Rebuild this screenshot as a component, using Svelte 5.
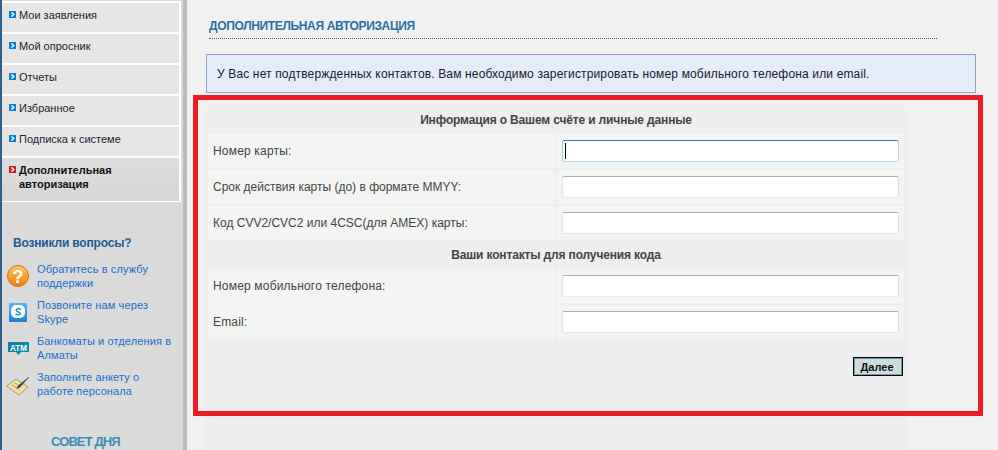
<script>
  const menu = ["Мои заявления", "Мой опросник", "Отчеты", "Избранное", "Подписка к системе"];
  const accountFields = [
    { label: "Номер карты:", wide: true },
    { label: "Срок действия карты (до) в формате MMYY:" },
    { label: "Код CVV2/CVC2 или 4CSC(для AMEX) карты:" },
  ];
  const contactFields = [
    { label: "Номер мобильного телефона:", wide: true },
    { label: "Email:", wide: true },
  ];
</script>

{#snippet bullet()}
  <svg class="bullet" width="7" height="7" viewBox="0 0 7 7">
    <rect width="7" height="7" fill="currentColor" />
    <polyline points="2.5,1.5 4.7,3.5 2.5,5.5" fill="none" stroke="#fff" stroke-width="1.4" />
  </svg>
{/snippet}

<div class="page">
  <aside class="sidebar">
    <ul class="menu">
      {#each menu as item}
        <li class="menu-item">{@render bullet()}<span>{item}</span></li>
      {/each}
      <li class="menu-item active">{@render bullet()}<span>Дополнительная<br />авторизация</span></li>
    </ul>

    <h3 class="help-title">Возникли вопросы?</h3>
    <ul class="help">
      <li>
        <svg width="24" height="24" viewBox="0 0 24 24">
          <defs>
            <linearGradient id="q" x1="0" y1="0" x2="0" y2="1">
              <stop offset="0" stop-color="#fccb5c" />
              <stop offset="1" stop-color="#f07c0e" />
            </linearGradient>
            <linearGradient id="sk" x1="0" y1="0" x2="0" y2="1">
              <stop offset="0" stop-color="#5ab4ee" />
              <stop offset="1" stop-color="#1c7fd6" />
            </linearGradient>
          </defs>
          <circle cx="12" cy="12" r="10.5" fill="url(#q)" stroke="#dd6f10" />
          <text x="12" y="18.500" text-anchor="middle" class="q-mark">?</text>
        </svg>
        <a href="#support">Обратитесь в службу<br />поддержки</a>
      </li>
      <li>
        <svg width="24" height="24" viewBox="0 0 24 24">
          <rect x="3" y="3" width="18" height="19" rx="1" fill="url(#sk)" />
          <rect x="5" y="5" width="14" height="13" rx="5" fill="#fff" />
          <path d="M15 9.400c-.8-.9-4.800-1.200-4.800.9 0 2.100 4.200 1.200 4.200 3.100 0 1.700-3.400 1.500-4.800.5" fill="none" stroke="#2a8fe0" stroke-width="1.500" />
        </svg>
        <a href="#skype">Позвоните нам через<br />Skype</a>
      </li>
      <li>
        <svg width="24" height="24" viewBox="0 0 24 24">
          <path d="M2 6h21v10h-8l-2.500 3-2.500-3H2z" fill="#0f86a8" />
          <text x="4" y="14.500" textLength="17" lengthAdjust="spacingAndGlyphs" class="atm">ATM</text>
        </svg>
        <a href="#atm">Банкоматы и отделения в<br />Алматы</a>
      </li>
      <li>
        <svg width="24" height="24" viewBox="0 0 24 24">
          <path d="M.5 14 10 7l12 8-9 8z" fill="#efdc9f" stroke="#a79a78" />
          <path d="M6 13l6 4M9 11l6 4" stroke="#b3a06a" />
          <path d="M23 5 12 14l-1 2.500 2.500-1z" fill="#333" stroke="#555" stroke-width=".6" />
        </svg>
        <a href="#survey">Заполните анкету о<br />работе персонала</a>
      </li>
    </ul>

    <div class="tip">СОВЕТ ДНЯ</div>
  </aside>

  <main class="content">
    <h2 class="title">ДОПОЛНИТЕЛЬНАЯ АВТОРИЗАЦИЯ</h2>
    <div class="notice">У Вас нет подтвержденных контактов. Вам необходимо зарегистрировать номер мобильного телефона или email.</div>

    <form class="panel" onsubmit={(e) => e.preventDefault()}>
      <div class="grid">
        <div class="section">Информация о Вашем счёте и личные данные</div>
        {#each accountFields as field, i}
          <div class="label" class:wide={field.wide}>{field.label}</div>
          <div class="field">
            <input type="text" class:focus={i === 0} />
            {#if i === 0}<span class="caret"></span>{/if}
          </div>
        {/each}
        <div class="section">Ваши контакты для получения кода</div>
        {#each contactFields as field}
          <div class="label" class:wide={field.wide}>{field.label}</div>
          <div class="field"><input type="text" /></div>
        {/each}
      </div>
      <div class="actions">
        <button type="submit">Далее</button>
      </div>
    </form>
  </main>

  <div class="highlight"></div>
</div>

<style>
  :global(body) {
    margin: 0;
    background: #f1f1f1;
  }

  .page {
    position: relative;
    display: flex;
    height: 450px;
    overflow: hidden;
    font-family: "Liberation Sans", Arial, sans-serif;
    font-size: 12px;
    background: #f1f1f1;
  }

  .sidebar {
    flex: 0 0 auto;
    box-sizing: border-box;
    width: 187px;
    padding-top: 1px;
    background: #dadada;
    border-left: 2px solid #2f5f8a;
    border-right: 4px solid #bcbcbc;
  }

  .menu {
    display: flex;
    flex-direction: column;
    gap: 2px;
    width: 179px;
    box-sizing: border-box;
    margin: 0;
    padding: 2px 2px 1px 0;
    list-style: none;
    background: #fff;
  }

  .menu-item {
    display: flex;
    align-items: flex-start;
    height: 29px;
    box-sizing: border-box;
    padding: 5px 0 0 7px;
    font-size: 11px;
    line-height: 14px;
    color: #1c2233;
    background: #e6e6e6;
  }

  .menu-item span {
    margin-left: 3px;
  }

  .bullet {
    flex: none;
    margin-top: 3px;
    color: #0a80d8;
  }

  .menu-item.active {
    height: 43px;
    font-weight: bold;
    color: #111;
    background: linear-gradient(#dddddd, #d6d6d6);
  }

  .menu-item.active .bullet {
    color: #cf1f28;
  }

  .help-title {
    margin: 34px 0 0 11px;
    font-size: 12px;
    line-height: 14px;
    font-weight: bold;
    letter-spacing: -0.18px;
    color: #1f5a92;
  }

  .help {
    margin: 12px 0 0;
    padding: 0 0 0 4px;
    list-style: none;
  }

  .help li {
    display: flex;
    gap: 7px;
    height: 36px;
    width: 170px;
  }

  .help svg {
    flex: none;
    margin-top: 2px;
  }

  .help a {
    font-size: 11px;
    line-height: 14px;
    letter-spacing: 0.12px;
    color: #1a6fcc;
    text-decoration: none;
  }

  .q-mark {
    font: bold 18px "Liberation Sans", sans-serif;
    fill: #fff;
  }

  .atm {
    font: bold 9.500px "Liberation Sans", sans-serif;
    fill: #fff;
  }

  .tip {
    margin-top: 28px;
    padding-left: 49px;
    font-size: 13px;
    line-height: 16px;
    font-weight: bold;
    letter-spacing: -0.9px;
    color: #3b8fb6;
  }

  .content {
    flex: 1;
    min-width: 0;
    padding-left: 19px;
  }

  .title {
    box-sizing: border-box;
    width: 728px;
    height: 39px;
    margin: 0 0 0 3px;
    padding-top: 19px;
    font-size: 12px;
    line-height: 14px;
    font-weight: bold;
    letter-spacing: -0.35px;
    color: #2a6ea8;
    border-bottom: 1px dotted #555;
  }

  .notice {
    box-sizing: border-box;
    width: 770px;
    height: 39px;
    margin-top: 15px;
    padding: 0 10px;
    line-height: 39px;
    letter-spacing: 0.15px;
    color: #1a1a2a;
    background: #e3ecf8;
    border: 1px solid #8ba6c4;
  }

  .panel {
    box-sizing: border-box;
    width: 700px;
    height: 345px;
    margin-top: 12px;
    padding: 2px;
    background: #eeeeee;
  }

  .grid {
    display: grid;
    grid-template-columns: 347px 347px;
    gap: 2px;
  }

  .section {
    grid-column: 1 / -1;
    height: 25px;
    line-height: 27px;
    text-align: center;
    font-weight: bold;
    letter-spacing: -0.15px;
    color: #444;
  }

  .label {
    height: 34px;
    padding-left: 5px;
    line-height: 34px;
    color: #444;
    background: #f3f5f3;
  }

  .label.wide {
    letter-spacing: 0.18px;
  }

  .field {
    position: relative;
    display: flex;
    align-items: center;
    height: 34px;
    padding: 0 5px;
    background: #f3f5f3;
  }

  input {
    box-sizing: border-box;
    width: 337px;
    height: 22px;
    padding: 0 2px;
    background: #fff;
    border: 1px solid;
    border-color: #abadb3 #dbdfe6 #e3e9ef #e2e3ea;
    border-radius: 2px;
    outline: none;
  }

  input.focus {
    border-color: #3d7bad #b5cfe7 #b7d9ed #a4c9e3;
  }

  .caret {
    position: absolute;
    left: 8px;
    top: 9px;
    width: 1px;
    height: 16px;
    background: #000;
  }

  .actions {
    display: flex;
    justify-content: flex-end;
    margin-top: 18px;
    padding-right: 1px;
  }

  button {
    box-sizing: border-box;
    width: 50px;
    height: 19px;
    padding: 0 2px 0 0;
    font: bold 11px "Liberation Sans", Arial, sans-serif;
    color: #111;
    background: #cddcdc;
    border: 1px solid #000;
    box-shadow: inset 0 0 0 1px #7d97ad;
  }

  .highlight {
    position: absolute;
    left: 193px;
    top: 95px;
    box-sizing: border-box;
    width: 790px;
    height: 321px;
    border: 5px solid #ed1c24;
    pointer-events: none;
  }
</style>
